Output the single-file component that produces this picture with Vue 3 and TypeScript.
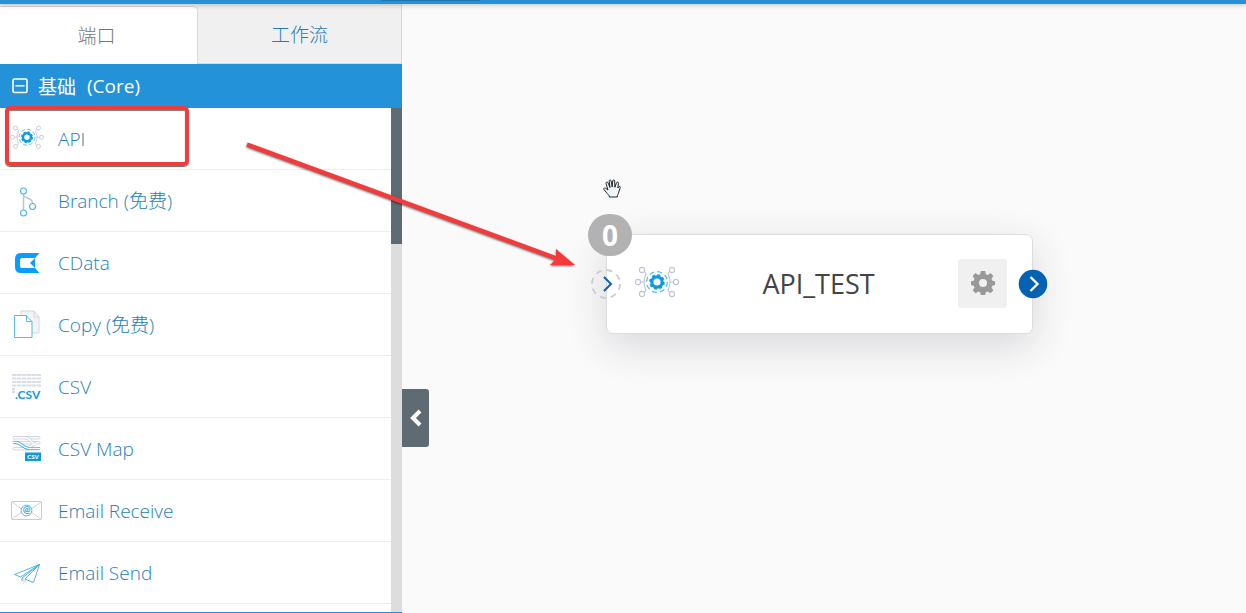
<script setup lang="ts">
import { ref } from 'vue'

interface Connector {
  icon: string
  label: string
}

const connectors: Connector[] = [
  { icon: 'api', label: 'API' },
  { icon: 'branch', label: 'Branch (免费)' },
  { icon: 'cdata', label: 'CData' },
  { icon: 'copy', label: 'Copy (免费)' },
  { icon: 'csv', label: 'CSV' },
  { icon: 'csvmap', label: 'CSV Map' },
  { icon: 'receive', label: 'Email Receive' },
  { icon: 'send', label: 'Email Send' },
]

const activeTab = ref<'ports' | 'flows'>('ports')
</script>

<template>
  <div class="app">
    <svg class="defs" aria-hidden="true">
      <symbol id="icon-api" viewBox="0 0 44 34">
        <g fill="none" stroke="#bcc5d3" stroke-width="1.100">
          <circle cx="7" cy="4" r="2.600" /><circle cx="37" cy="4" r="2.600" />
          <circle cx="3" cy="16" r="2.600" /><circle cx="41" cy="16" r="2.600" />
          <circle cx="7" cy="28" r="2.600" /><circle cx="37" cy="28" r="2.600" />
          <path d="M5.600 16H9M38.400 16H35M9.500 5.500l1.500 2-.6 2C8.500 14 8.500 18 10.400 22.500l.6 2-1.500 2M34.500 5.500l-1.500 2 .6 2c1.900 4.500 1.900 8.500 0 13l-.6 2 1.500 2" />
        </g>
        <circle cx="22" cy="16" r="10.400" fill="none" stroke="#55b8ef" stroke-width="1.200" stroke-dasharray="5 3.160" />
        <circle cx="22" cy="16" r="5.200" fill="none" stroke="#0a9be3" stroke-width="3.200" />
        <circle cx="22" cy="16" r="7" fill="none" stroke="#0a9be3" stroke-width="1.600" stroke-dasharray="3 2.500" />
      </symbol>
    </svg>

    <header class="topbar"><span class="topbar-mark"></span></header>

    <div class="workspace">
      <aside class="sidebar">
        <div class="tabs" role="tablist">
          <button class="tab" :class="{ active: activeTab === 'ports' }" role="tab" @click="activeTab = 'ports'">端口</button>
          <button class="tab" :class="{ active: activeTab === 'flows' }" role="tab" @click="activeTab = 'flows'">工作流</button>
        </div>
        <button class="group">
          <svg class="group-icon" viewBox="0 0 16 16" aria-hidden="true">
            <rect x="1" y="1" width="14" height="13.500" rx="1.500" fill="none" stroke="#fff" stroke-width="1.600" />
            <path d="M3.500 7.800h9" stroke="#fff" stroke-width="1.500" />
          </svg>
          <span class="group-name">基础</span>
          <span>(Core)</span>
        </button>
        <div class="list-wrap">
          <nav class="list">
            <a v-for="item in connectors" :key="item.icon" class="item" href="#">
              <svg class="item-icon" viewBox="0 0 34 32" aria-hidden="true">
                <use v-if="item.icon === 'api'" href="#icon-api" x="0" y="2" width="34" height="26" />
                <g v-else-if="item.icon === 'branch'">
                  <path d="M13.500 7v18M13.500 10c0 4 9 2 9 8" fill="none" stroke="#bcc5d3" stroke-width="1.500" />
                  <g fill="#fff" stroke="#4bb8e8" stroke-width="1.100">
                    <circle cx="13.500" cy="6" r="3" /><circle cx="13.500" cy="28" r="3" /><circle cx="22.500" cy="21.500" r="3" />
                  </g>
                </g>
                <g v-else-if="item.icon === 'cdata'" fill="#0a9cff">
                  <path d="M29.500 6H11Q5 6 5 12v8q0 6 6 6h18.500L25 21H12q-2 0-2-2v-6q0-2 2-2h13z" />
                  <path d="M25 11v10l-5-5z" />
                </g>
                <g v-else-if="item.icon === 'copy'">
                  <path d="M11 2h13l5 6v16H12z" fill="#f3f4f6" stroke="#d0d6de" />
                  <path d="M24 2v6h5" fill="none" stroke="#d0d6de" />
                  <path d="M4.500 6.500H16l6 6v16H4.500z" fill="#fff" stroke="#51bde8" />
                  <path d="M16.500 6.500v6H22" fill="none" stroke="#51bde8" />
                </g>
                <g v-else-if="item.icon === 'csv'">
                  <path d="M2 4h29M2 7.500h29M2 11h29M2 14.500h29" stroke="#d9dde6" stroke-width="2.200" stroke-dasharray="4.500 .4" />
                  <path d="M2 18h3M2 21h3" stroke="#d9dde6" stroke-width="2.400" />
                  <text x="5" y="28" font-size="12" font-weight="700" font-family="Lato, sans-serif" fill="#0a9be3">.CSV</text>
                </g>
                <g v-else-if="item.icon === 'csvmap'">
                  <g fill="#fff" stroke="#ccd2db" stroke-width=".9">
                    <rect x="3" y="3.500" width="27" height="2.500" rx="1" />
                    <rect x="3" y="8.500" width="27" height="2.500" rx="1" />
                    <rect x="3" y="14.500" width="27" height="2.500" rx="1" />
                  </g>
                  <path d="M15 4.700c6 0 6 6.500 11 6.500M15 15.700c5 0 6-4.500 11-4.500" fill="none" stroke="#ccd2db" stroke-width="3" />
                  <path d="M15 4.700c6 0 6 6.500 11 6.500M15 15.700c5 0 6-4.500 11-4.500" fill="none" stroke="#fff" stroke-width="1.500" />
                  <path d="M3 9.500c8-2 9 6 16 6h11" fill="none" stroke="#3aaeea" stroke-width="3" />
                  <path d="M3 9.500c8-2 9 6 16 6h11" fill="none" stroke="#fff" stroke-width="1.400" />
                  <rect x="15" y="19.500" width="16" height="8.500" fill="#0a9be3" />
                  <text x="23" y="26" text-anchor="middle" font-size="6" font-weight="900" font-family="Lato, sans-serif" fill="#fff">CSV</text>
                </g>
                <g v-else-if="item.icon === 'receive'">
                  <rect x="1.500" y="6.500" width="30" height="18" rx="1" fill="#fff" stroke="#c4ccd6" />
                  <path d="M2 7l11 8M31 7l-11 8M2 24l10-7M31 24l-10-7" stroke="#c4ccd6" stroke-width=".9" />
                  <circle cx="16.500" cy="15.500" r="5.400" fill="#fff" stroke="#3aaeea" stroke-width=".9" />
                  <text x="16.500" y="18.300" text-anchor="middle" font-size="9" font-weight="700" font-family="Lato, sans-serif" fill="#2aa0dc">@</text>
                </g>
                <g v-else>
                  <path d="M12 20l1 8 4-5z" fill="#e3e6eb" />
                  <path d="M29.500 7.500L4.500 17.500l6 2.500zM29.500 7.500L23.500 25.500 15 22zM29.500 7.500L12 21v3" fill="none" stroke="#3aaeea" stroke-width=".9" stroke-linejoin="round" />
                </g>
              </svg>
              <span>{{ item.label }}</span>
            </a>
          </nav>
          <div class="track"><div class="thumb"></div></div>
        </div>
      </aside>

      <main class="canvas">
        <button class="collapse" aria-label="收起">
          <svg width="14" height="18" viewBox="0 0 14 18"><path d="M11 2L4 9l7 7" fill="none" stroke="#fff" stroke-width="4" /></svg>
        </button>

        <section class="node">
          <span class="badge">0</span>
          <button class="port port-in" aria-label="输入">
            <svg width="32" height="32" viewBox="0 0 32 32">
              <circle cx="16" cy="16" r="14" fill="none" stroke="#ccc" stroke-width="1.800" stroke-dasharray="6 5" />
              <path d="M14 9l7 7-7 7" fill="none" stroke="#0b5fae" stroke-width="2" />
            </svg>
          </button>
          <svg class="node-icon" aria-hidden="true"><use href="#icon-api" /></svg>
          <h2 class="node-title">API_TEST</h2>
          <button class="settings" aria-label="设置">
            <svg width="24" height="24" viewBox="0 0 24 24">
              <path fill="#999" fill-rule="evenodd" d="M9.800 0h4.400l.6 3.200 2 .8 2.700-1.900 2.900 2.900L20.500 7.700l.8 2 2.700.5v3.900l-2.700.6-.8 2 1.900 2.600-2.900 3-2.700-1.900-2 .8-.6 2.800H9.800l-.6-2.800-2-.8-2.700 1.900-2.900-3 1.900-2.600-.8-2L0 14.100v-3.900l2.700-.5.8-2L1.600 5l2.900-2.900L7.200 4l2-.8zM12 8a4 4 0 1 0 0 8 4 4 0 0 0 0-8z" />
            </svg>
          </button>
          <button class="port port-out" aria-label="输出">
            <svg width="32" height="32" viewBox="0 0 32 32">
              <circle cx="16" cy="16" r="14.300" fill="#0561b1" />
              <path d="M13.500 9l7 7-7 7" fill="none" stroke="#fff" stroke-width="2.400" />
            </svg>
          </button>
        </section>
      </main>
    </div>

    <div class="highlight"></div>
    <svg class="arrow" width="340" height="136" viewBox="0 0 340 136" aria-hidden="true">
      <g class="arrow-shape">
        <path d="M7 10.500L318 125" stroke="#f43b3b" stroke-width="4.400" />
        <path d="M316 115l19 16h-25l6-6z" fill="#f43b3b" />
      </g>
    </svg>
    <svg class="hand" width="18" height="19" viewBox="0 0 18 19" aria-hidden="true">
      <path d="M6.500 18c-.5-2-2-3-3.500-5L.8 10.500c-.6-1.300 1-2 2-1.200L5 11 3 4.500c-.3-1.500 1.500-2 2-.7L7 8.500 6.200 2.200C6 .7 8 .6 8.200 2L9.200 8 9.700 1.800C9.900.5 11.700.6 11.700 2L11.900 8.300l1.600-4.500c.5-1.200 2.200-.8 2 .6L14.800 9l1-1.200c.9-1 1.700-.2 1.400.7L15.800 13c-.5 2-1.500 3-1.500 5z" fill="#eef6fd" stroke="#111" stroke-width=".9" stroke-linejoin="round" />
    </svg>
  </div>
</template>

<style>
body {
  margin: 0;
  overflow: hidden;
}
</style>

<style scoped>
.app {
  position: relative;
  display: flex;
  flex-direction: column;
  height: 100vh;
  overflow: hidden;
  background: #fafafa;
  color: #1f7fbb;
  font-family: "Open Sans", "Noto Sans", "Noto Sans CJK SC", sans-serif;
  font-size: 19px;
  font-weight: 300;
}
.defs {
  position: absolute;
  width: 0;
  height: 0;
}
button {
  margin: 0;
  padding: 0;
  border: 0;
  background: none;
  color: inherit;
  font: inherit;
  cursor: pointer;
}
.topbar {
  position: relative;
  z-index: 1;
  flex: none;
  height: 4px;
  background: #2492d8;
  box-shadow: 0 1px 5px rgba(0, 0, 0, 0.25);
}
.topbar-mark {
  display: block;
  width: 99px;
  height: 1px;
  margin-left: 381px;
  background: #1c75ae;
}
.workspace {
  display: flex;
  flex: 1;
  min-height: 0;
}
.sidebar {
  display: flex;
  flex-direction: column;
  flex: none;
  width: 402px;
  background: #fff;
}
.tabs {
  display: flex;
  flex: none;
  height: 60px;
  background: #f0f0f0;
}
.tab {
  box-sizing: border-box;
  flex: 1;
  border-right: 1px solid #d9d9d9;
  border-bottom: 1px solid #d9d9d9;
  font-family: "Noto Sans CJK SC", sans-serif;
  font-size: 19px;
  font-weight: 300;
}
.tab.active {
  flex: 0 0 198px;
  margin-top: 2px;
  padding: 0 4px 2px 0;
  border-top: 1px solid #d9d9d9;
  border-bottom: 0;
  border-radius: 0 5px 0 0;
  background: #fff;
  color: #777;
}
.group {
  display: flex;
  align-items: center;
  flex: none;
  height: 44px;
  padding-left: 12px;
  background: #2492d8;
  color: #fff;
  font-weight: 400;
}
.group-icon {
  width: 16px;
  height: 16px;
  margin-right: 10px;
}
.group-name {
  margin-right: 11px;
}
.list-wrap {
  display: flex;
  flex: 1;
  min-height: 0;
  border-bottom: 1px solid #2492d8;
}
.list {
  flex: 1;
  overflow: hidden;
}
.item {
  box-sizing: border-box;
  display: flex;
  align-items: center;
  gap: 14px;
  height: 62px;
  padding-left: 10px;
  border-bottom: 1px solid #eee;
  color: inherit;
  line-height: 26px;
  text-decoration: none;
}
.item-icon {
  flex: none;
  width: 34px;
  height: 32px;
}
.track {
  width: 11px;
  background: #ddd;
}
.thumb {
  height: 136px;
  background: #5f6b73;
}
.canvas {
  position: relative;
  flex: 1;
}
.collapse {
  position: absolute;
  top: 385px;
  left: 0;
  display: grid;
  place-items: center;
  width: 27px;
  height: 58px;
  border-radius: 0 3px 3px 0;
  background: #5f6b73;
}
.node {
  position: absolute;
  top: 230px;
  left: 204px;
  box-sizing: border-box;
  display: flex;
  align-items: center;
  width: 427px;
  height: 100px;
  padding: 0 25px 2px 28px;
  border: 1px solid #ddd;
  border-radius: 7px;
  background: #fff;
  box-shadow: 0 12px 40px rgba(40, 40, 60, 0.16);
}
.badge {
  position: absolute;
  top: -21px;
  left: -19px;
  width: 44px;
  height: 42px;
  border-radius: 21px;
  background: #b2b2b2;
  color: #fff;
  font-size: 28px;
  font-weight: 700;
  line-height: 42px;
  text-align: center;
}
.port {
  position: absolute;
  top: 33px;
  width: 32px;
  height: 32px;
}
.port svg {
  display: block;
}
.port-in {
  left: -17px;
}
.port-out {
  right: -17px;
}
.node-icon {
  flex: none;
  width: 44px;
  height: 34px;
}
.node-title {
  flex: 1;
  margin: 0;
  color: #444;
  font-size: 27px;
  font-weight: 400;
  text-align: center;
}
.settings {
  display: grid;
  place-items: center;
  flex: none;
  width: 49px;
  height: 49px;
  border-radius: 3px;
  background: #f0f0f0;
}
.highlight {
  position: absolute;
  z-index: 2;
  top: 106px;
  left: 5px;
  box-sizing: border-box;
  width: 184px;
  height: 60px;
  border: 4px solid #f43b3b;
  border-radius: 5px;
  box-shadow: 0 1px 1px #666, inset 0 1px 1px #777;
  pointer-events: none;
}
.arrow {
  position: absolute;
  z-index: 2;
  top: 134px;
  left: 240px;
  pointer-events: none;
}
.arrow-shape {
  filter: drop-shadow(0 1px 1px rgba(0, 0, 0, 0.6));
}
.hand {
  position: absolute;
  top: 179px;
  left: 603px;
}
</style>
